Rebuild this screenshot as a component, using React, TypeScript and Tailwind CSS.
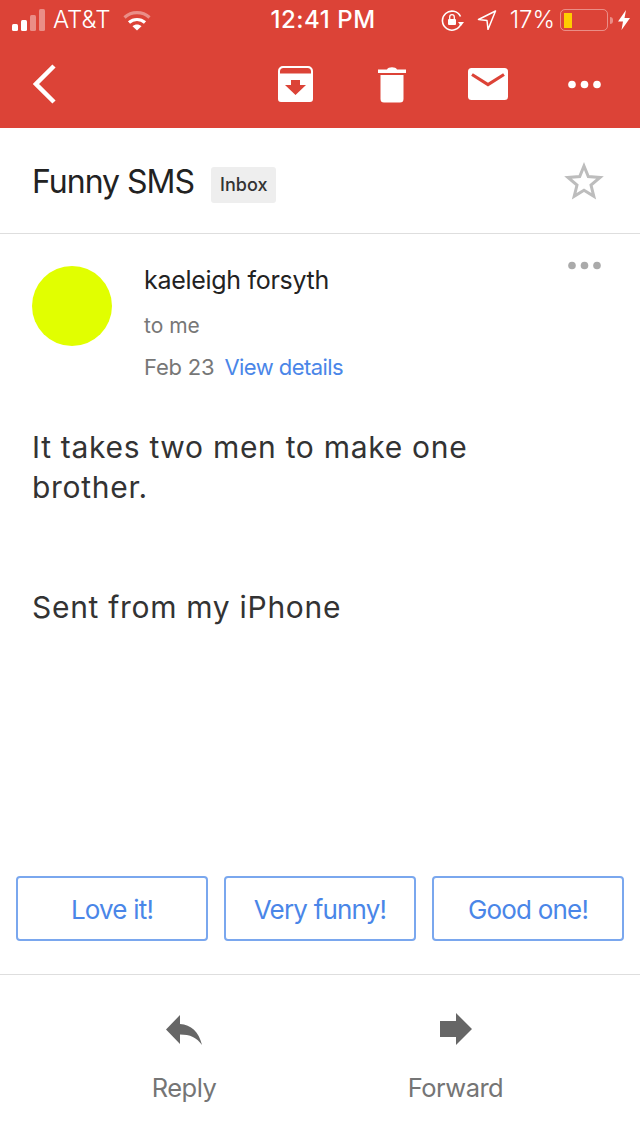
const font = "font-['Inter',sans-serif]";

function Signal() {
  return (
    <svg width="33" height="22" viewBox="0 0 33 22" fill="#fff">
      <rect x="0" y="15" width="6" height="7" rx="1.5" />
      <rect x="9" y="11" width="6" height="11" rx="1.5" />
      <rect x="18" y="6" width="6" height="16" rx="1.5" fillOpacity=".4" />
      <rect x="27" y="0" width="6" height="22" rx="1.5" fillOpacity=".4" />
    </svg>
  );
}

function Wifi() {
  return (
    <svg width="28" height="21" viewBox="0 0 28 21" fill="none" stroke="#fff" strokeWidth="3.2">
      <path d="M1.5 7.5C8.5 1 19.5 1 26.5 7.5" strokeOpacity=".4" />
      <path d="M6 12.5C10.5 8.5 17.5 8.5 22 12.5" />
      <path d="M14 20.5L9.5 16.2C12 14 16 14 18.5 16.2Z" fill="#fff" stroke="none" />
    </svg>
  );
}

function RotationLock() {
  return (
    <svg width="24" height="22" viewBox="0 0 24 22" fill="none">
      <path d="M20 14.5A9.5 9.5 0 1 1 19.5 7.5" stroke="#fff" strokeWidth="1.6" />
      <path d="M17 13h6l-3 4z" fill="#fff" />
      <rect x="7" y="10" width="8" height="6" rx="1" fill="#fff" />
      <path d="M8.7 10V8a2.3 2.3 0 0 1 4.6 0v2" stroke="#fff" strokeWidth="1.3" />
    </svg>
  );
}

function Location() {
  return (
    <svg width="20" height="20" viewBox="0 0 20 20" fill="none" stroke="#fff" strokeWidth="1.5" strokeLinejoin="round">
      <path d="M18.5 1L1.5 9.5L10 10.5L11 19.5Z" />
    </svg>
  );
}

function Battery() {
  return (
    <div className="flex items-center">
      <div className="w-[48px] h-[22px] rounded-[5px] border-[1.5px] border-white/40 p-[2.5px]">
        <div className="w-[8px] h-full bg-[#ffcc00]" />
      </div>
      <div className="ml-[2px] w-[3px] h-[7px] rounded-r-sm bg-white/40" />
    </div>
  );
}

function Bolt() {
  return (
    <svg width="12" height="20" viewBox="0 0 12 20" fill="#fff">
      <path d="M8 0L0 11.5H5L3.5 20L12 8H6.5Z" />
    </svg>
  );
}

function Archive() {
  return (
    <svg width="36" height="36" viewBox="0 0 36 36">
      <path
        d="M6 0H30A5 5 0 0 1 35 5V33A3 3 0 0 1 32 36H3A3 3 0 0 1 0 33V5A5 5 0 0 1 5 0ZM2 7.5H33V5.5A3.5 3.5 0 0 0 29.5 2H5.5A3.5 3.5 0 0 0 2 5.5Z"
        fill="#fff"
        fillRule="evenodd"
      />
      <path d="M13 14H22V19H28L17.5 29L7 19H13Z" fill="#dc4337" />
    </svg>
  );
}

function Trash() {
  return (
    <svg width="28" height="37" viewBox="0 0 28 37" fill="#fff">
      <path d="M0 3.5H9C10 .5 18 .5 19 3.5H28V7H0Z" />
      <path d="M2.5 9H25.5V33A3.5 3.5 0 0 1 22 36.5H6A3.5 3.5 0 0 1 2.5 33Z" />
    </svg>
  );
}

function Mail() {
  return (
    <svg width="40" height="32" viewBox="0 0 40 32">
      <rect width="40" height="32" rx="3.5" fill="#fff" />
      <path d="M4 6.5L20 16.5L36 6.5" fill="none" stroke="#dc4337" strokeWidth="3.2" />
    </svg>
  );
}

function Dots({ color }: { color: string }) {
  return (
    <svg width="33" height="9" viewBox="0 0 33 9" fill={color}>
      <circle cx="4" cy="4.5" r="3.8" />
      <circle cx="16.5" cy="4.5" r="3.8" />
      <circle cx="29" cy="4.5" r="3.8" />
    </svg>
  );
}

function Star() {
  return (
    <svg width="40" height="38" viewBox="0 0 40 38" fill="none" stroke="#bdbdbd" strokeWidth="3">
      <path d="M20 4L24.3 14.6L36 15.5L27 23L29.8 34.3L20 28.2L10.2 34.3L13 23L4 15.5L15.7 14.6Z" />
    </svg>
  );
}

function ReplyIcon() {
  return (
    <svg width="36" height="30" viewBox="0 0 36 30" fill="#666">
      <path d="M14 0V9C25 9.5 33 17 36 30C31 22.5 24 19.5 14 19.5V29L0 14.5Z" />
    </svg>
  );
}

function ForwardIcon() {
  return (
    <svg width="32" height="32" viewBox="0 0 32 32" fill="#666">
      <path d="M0 8H16V0L32 16L16 32V24H0Z" />
    </svg>
  );
}

export default function App() {
  const replies = ["Love it!", "Very funny!", "Good one!"];

  return (
    <div className={`${font} w-[640px] h-[1136px] bg-white flex flex-col overflow-hidden`}>
      <div className="h-[128px] bg-[#dc4337] text-white shrink-0">
        <div className="h-[40px] flex items-center pl-[12px] pr-[10px]">
          <div className="flex-1 flex items-center">
            <Signal />
            <span className="ml-[8px] text-[24px] font-light">AT&amp;T</span>
            <div className="ml-[13px]"><Wifi /></div>
          </div>
          <span className="ml-[4px] text-[24px] font-medium tracking-[0.55px]">12:41 PM</span>
          <div className="flex-1 flex items-center justify-end">
            <RotationLock />
            <div className="ml-[12px]"><Location /></div>
            <span className="ml-[13px] text-[24px] font-light">17%</span>
            <div className="ml-[5px]"><Battery /></div>
            <div className="ml-[5px]"><Bolt /></div>
          </div>
        </div>
        <div className="h-[88px] flex items-center pl-[33px] pr-[39px]">
          <svg width="23" height="40" viewBox="0 0 23 40" fill="none" stroke="#fff" strokeWidth="4.5" className="mr-auto">
            <path d="M21 2L3 20L21 38" />
          </svg>
          <div className="flex items-center">
            <Archive />
            <div className="ml-[64px]"><Trash /></div>
            <div className="ml-[62px]"><Mail /></div>
            <div className="ml-[60px]"><Dots color="#fff" /></div>
          </div>
        </div>
      </div>

      <div className="h-[106px] shrink-0 border-b border-[#dedede] flex items-center pl-[32px] pr-[36px]">
        <span className="mt-[2px] text-[32px] tracking-[-1px] text-[#222]">Funny SMS</span>
        <span className="ml-[17px] mt-[8px] h-[36px] px-[9px] flex items-center bg-[#eee] rounded-[3px] text-[18px] font-medium text-[#333]">Inbox</span>
        <div className="ml-auto"><Star /></div>
      </div>

      <div className="flex-1 relative">
        <div className="absolute right-[39px] top-[27px]"><Dots color="#aaa" /></div>
        <div className="flex pl-[32px] pt-[32px]">
          <div className="w-[80px] h-[80px] rounded-full bg-[#e1ff00]" />
          <div className="ml-[32px]">
            <div className="text-[25px] leading-[30px] -mt-[1px] tracking-[-0.3px] text-[#222]">kaeleigh forsyth</div>
            <div className="mt-[18px] text-[21px] leading-[26px] text-[#777]">to me</div>
            <div className="mt-[14px] text-[22px] leading-[28px] tracking-[-0.2px] text-[#777]">
              Feb 23
              <span className="ml-[10px] tracking-[-0.55px] text-[#4a86e8]">View details</span>
            </div>
          </div>
        </div>
        <div className="mt-[46px] pl-[32px] text-[30px] leading-[40px] tracking-[0.7px] text-[#333]">
          <p>It takes two men to make one<br />brother.</p>
          <p className="mt-[80px]">Sent from my iPhone</p>
        </div>
      </div>

      <div className="shrink-0 flex gap-[16px] px-[16px] pb-[33px]">
        {replies.map((reply) => (
          <div
            key={reply}
            className="flex-1 h-[65px] pt-[1px] border-2 border-[#7aa7ee] rounded-[4px] flex items-center justify-center text-[26px] tracking-[-0.8px] text-[#4a86e8]"
          >
            {reply}
          </div>
        ))}
      </div>

      <div className="h-[162px] shrink-0 border-t border-[#dedede] flex text-[#757575] text-[25.5px] tracking-[-0.55px]">
        <div className="w-[368px] flex flex-col items-center pt-[40px]">
          <ReplyIcon />
          <span className="mt-[24px]">Reply</span>
        </div>
        <div className="w-[175px] flex flex-col items-center pt-[38px]">
          <ForwardIcon />
          <span className="mt-[24px]">Forward</span>
        </div>
      </div>
    </div>
  );
}
